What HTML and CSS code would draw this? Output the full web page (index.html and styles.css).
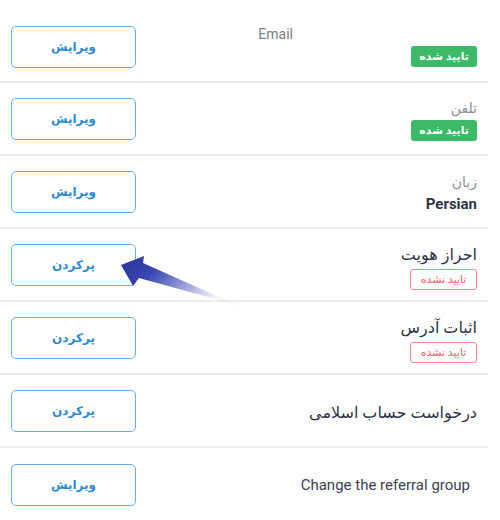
FILE: index.html
```html
<!DOCTYPE html>
<html lang="fa" dir="rtl">
<head>
    <meta charset="UTF-8">
    <meta name="viewport" content="width=device-width, initial-scale=1.0">
    <title>تنظیمات حساب</title>
    <link rel="stylesheet" href="styles.css">
</head>
<body>

    <div class="settings">
        <div class="row first">
            <div class="info">
                <span class="label email-label">Email</span>
                <span class="badge ok">تایید شده</span>
            </div>
            <button class="action">ویرایش</button>
        </div>

        <div class="row">
            <div class="info">
                <span class="label">تلفن</span>
                <span class="badge ok">تایید شده</span>
            </div>
            <button class="action">ویرایش</button>
        </div>

        <div class="row">
            <div class="info">
                <span class="label">زبان</span>
                <span class="value">Persian</span>
            </div>
            <button class="action">ویرایش</button>
        </div>

        <div class="row">
            <div class="info">
                <span class="title">احراز هویت</span>
                <span class="badge bad">تایید نشده</span>
            </div>
            <button class="action">پرکردن</button>
        </div>

        <div class="row">
            <div class="info">
                <span class="title">اثبات آدرس</span>
                <span class="badge bad">تایید نشده</span>
            </div>
            <button class="action">پرکردن</button>
        </div>

        <div class="row">
            <div class="info">
                <span class="title">درخواست حساب اسلامی</span>
            </div>
            <button class="action">پرکردن</button>
        </div>

        <div class="row last">
            <div class="info">
                <span class="title latin">Change the referral group</span>
            </div>
            <button class="action">ویرایش</button>
        </div>

        <!-- arrow pointing at the identity button -->
        <svg class="pointer" width="130" height="60" viewBox="0 0 130 60">
            <defs>
                <linearGradient id="arrowFill" x1="0" y1="0" x2="1" y2="0.4">
                    <stop offset="0" stop-color="#27339a"/>
                    <stop offset="0.35" stop-color="#3a47b0"/>
                    <stop offset="1" stop-color="#3a47b0" stop-opacity="0.05"/>
                </linearGradient>
            </defs>
            <polygon points="6,20 29,11 28,18 122,60 24,33 18,41" fill="url(#arrowFill)"/>
        </svg>
    </div>

</body>
</html>
```

FILE: styles.css
```css
body {
    margin: 0;
    background-color: #fff;
    font-family: Roboto, "DejaVu Sans", sans-serif;
}
.settings {
    position: relative;
    width: 488px;
    margin-left: 0;
    margin-right: auto;
}
.row {
    display: flex;
    justify-content: space-between;
    align-items: center;
    padding: 0 11px;
    border-bottom: 2px solid #ececec;
    box-sizing: border-box;
    height: 73px;
}
.row.first {
    height: 83px;
    padding-top: 12px;
}
.row.first .info {
    margin-top: 14px;
}
.row.last {
    border-bottom: none;
}
.info {
    display: flex;
    flex-direction: column;
    align-items: flex-start;
    gap: 3px;
    padding-top: 4px;
}
.label {
    font-size: 14px;
    color: #8a8f98;
    line-height: 17px;
}
.email-label {
    margin-right: 184px;
    margin-top: -18px;
    color: #7b8089;
}
.value {
    font-size: 15px;
    font-weight: bold;
    color: #2d3446;
    line-height: 20px;
}
.title {
    font-size: 16px;
    color: #2d3446;
    line-height: 22px;
}
.title.latin {
    font-size: 15px;
    color: #3b4253;
    margin-right: 7px;
    padding-bottom: 4px;
}
.badge {
    font-size: 11px;
    line-height: 19px;
    height: 21px;
    padding: 0 8px;
    border-radius: 3px;
    box-sizing: border-box;
    white-space: nowrap;
}
.badge.ok {
    background-color: #3dba67;
    color: #fff;
    font-weight: bold;
    line-height: 21px;
    min-width: 63px;
    text-align: center;
}
.badge.bad {
    border: 1px solid #f28a90;
    color: #ef5f6a;
    min-width: 67px;
    text-align: center;
}
.action {
    width: 125px;
    height: 42px;
    background-color: #fff;
    border: 1px solid #62b0e8;
    border-radius: 5px;
    color: #2a8ad4;
    font-family: "DejaVu Sans", sans-serif;
    font-size: 12px;
    font-weight: bold;
    cursor: pointer;
}
.pointer {
    position: absolute;
    left: 115px;
    top: 245px;
}
```
